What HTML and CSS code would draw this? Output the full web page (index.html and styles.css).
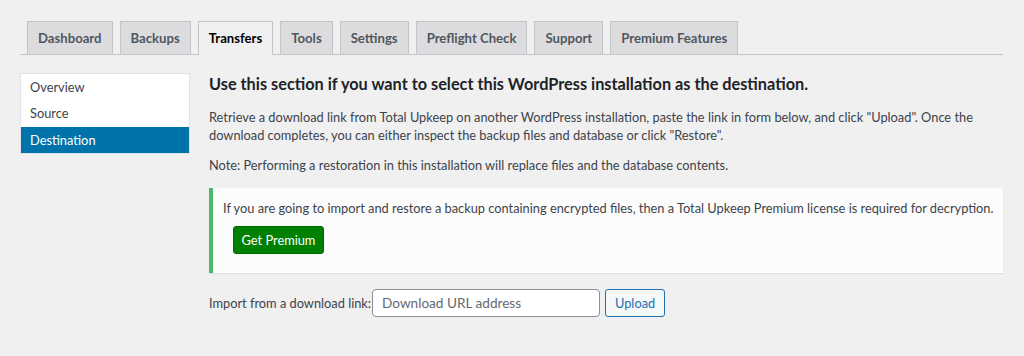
FILE: index.html
```html
<!DOCTYPE html>
<html lang="en">
<head>
<meta charset="utf-8">
<title>Total Upkeep - Transfers</title>
<link rel="stylesheet" href="styles.css">
</head>
<body>
<div class="wrap">
  <nav class="tabs">
    <a class="tab">Dashboard</a>
    <a class="tab">Backups</a>
    <a class="tab active">Transfers</a>
    <a class="tab">Tools</a>
    <a class="tab">Settings</a>
    <a class="tab">Preflight Check</a>
    <a class="tab">Support</a>
    <a class="tab">Premium Features</a>
  </nav>
  <div class="layout">
    <ul class="menu">
      <li class="menu-item">Overview</li>
      <li class="menu-item">Source</li>
      <li class="menu-item current">Destination</li>
    </ul>
    <main class="main">
      <h2 class="title">Use this section if you want to select this WordPress installation as the destination.</h2>
      <p class="text first">Retrieve a download link from Total Upkeep on another WordPress installation, paste the link in form below, and click "Upload". Once the download completes, you can either inspect the backup files and database or click "Restore".</p>
      <p class="text note">Note: Performing a restoration in this installation will replace files and the database contents.</p>
      <div class="notice">
        <p class="notice-text">If you are going to import and restore a backup containing encrypted files, then a Total Upkeep Premium license is required for decryption.</p>
        <button class="btn-premium" type="button">Get Premium</button>
      </div>
      <form class="import">
        <label class="import-label" for="url">Import from a download link:</label>
        <input class="import-input" id="url" type="text" placeholder="Download URL address">
        <button class="btn-upload" type="button">Upload</button>
      </form>
    </main>
  </div>
</div>
</body>
</html>
```
FILE: styles.css
```css
html, body {
  margin: 0;
  padding: 0;
}
body {
  background: #f0f0f1;
  color: #3c434a;
  font-family: Lato, "Liberation Sans", sans-serif;
  font-size: 12.8px;
}
.wrap {
  padding: 21px 21px 0 20px;
}
.tabs {
  display: flex;
  align-items: flex-end;
  border-bottom: 1px solid #c3c4c7;
}
.tab {
  margin-left: 7px;
  padding: 5px 10px;
  line-height: 22px;
  font-size: 13.15px;
  font-weight: 700;
  color: #50575e;
  background: #dcdcde;
  border: 1px solid #c3c4c7;
  border-bottom: none;
  cursor: pointer;
}
.tab.active {
  background: #f0f0f1;
  color: #000;
  margin-bottom: -1px;
  padding-bottom: 6px;
}
.layout {
  display: flex;
  align-items: flex-start;
  gap: 19px;
  margin-top: 18px;
}
.menu {
  list-style: none;
  margin: 0;
  padding: 0;
  width: 168px;
  background: #fff;
  border: 1px solid #e2e2e4;
  flex: none;
}
.menu-item {
  line-height: 26.4px;
  padding: 0 9px;
  color: #3c434a;
}
.menu-item.current {
  background: #0073aa;
  color: #fff;
}
.main {
  flex: 1;
  min-width: 0;
}
.title {
  margin: 0;
  padding-top: 2px;
  font-size: 16.3px;
  line-height: 18px;
  font-weight: 700;
  color: #1d2327;
}
.text {
  margin: 0;
  line-height: 18px;
}
.first {
  margin-top: 15px;
}
.note {
  margin-top: 12px;
}
.notice {
  margin-top: 14px;
  background: #fcfcfc;
  border-left: 4px solid #4ab866;
  box-shadow: 0 1px 1px rgba(0, 0, 0, 0.07);
  padding: 11px 4px 19px 10px;
}
.notice-text {
  margin: 0;
  line-height: 18px;
}
.btn-premium {
  display: block;
  margin: 9px 0 0 10px;
  width: 91px;
  height: 28px;
  padding: 0;
  background: #008000;
  border: 1px solid #006b00;
  border-radius: 3px;
  color: #fff;
  font-family: inherit;
  font-size: 12.8px;
}
.import {
  display: flex;
  align-items: center;
  margin: 16px 0 0;
}
.import-label {
  margin-right: 1px;
}
.import-input {
  box-sizing: border-box;
  width: 228px;
  height: 28px;
  padding: 0 9px;
  border: 1px solid #8c8f94;
  border-radius: 4px;
  background: #fff;
  font-family: inherit;
  font-size: 13.6px;
  color: #2c3338;
}
.import-input::placeholder {
  color: #646970;
}
.btn-upload {
  box-sizing: border-box;
  margin-left: 5px;
  width: 60px;
  height: 28px;
  padding: 0;
  background: #f6f7f7;
  border: 1px solid #2271b1;
  border-radius: 3px;
  color: #2271b1;
  font-family: inherit;
  font-size: 12.8px;
}
```
